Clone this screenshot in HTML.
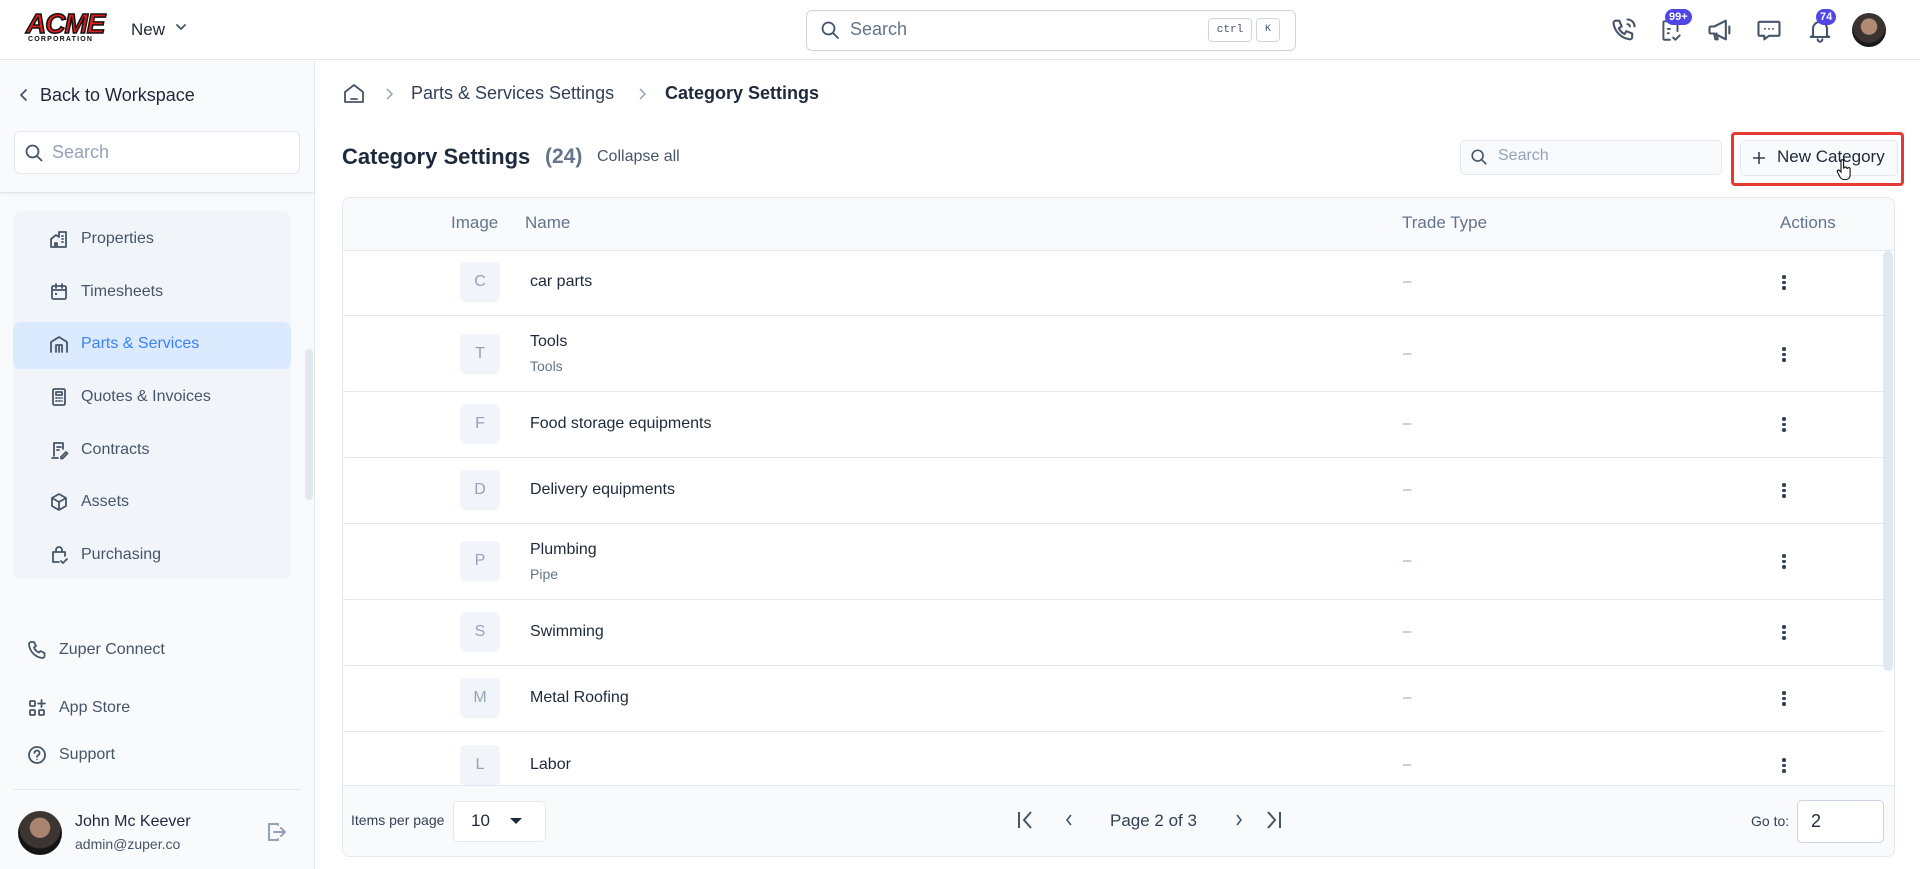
<!DOCTYPE html>
<html><head><meta charset="utf-8"><style>
*{box-sizing:border-box;margin:0;padding:0}
body{width:1920px;height:869px;overflow:hidden;background:#fff;font-family:"Liberation Sans",Arial,sans-serif;color:#1e293b;position:relative}
.a{position:absolute}
.hdr{left:0;top:0;width:1920px;height:60px;border-bottom:1px solid #e2e8f0;background:#fff}
.side{left:0;top:61px;width:315px;height:808px;background:#f8fafc;border-right:1px solid #e2e8f0}
.nav{font-size:16px;color:#475569;display:flex;align-items:center}
.nav svg{margin-right:12px}
.ic{fill:none;stroke:#475569;stroke-width:1.8;stroke-linecap:round;stroke-linejoin:round}
.row{left:343px;width:1540px;border-bottom:1px solid #e2e8f0}
.lt{width:40px;height:40px;background:#f1f5f9;border-radius:5px;color:#94a3b8;font-size:16px;display:flex;align-items:center;justify-content:center;left:460px}
.nm{left:530px;font-size:16px;color:#1e293b}
.sb{left:530px;font-size:14px;color:#64748b}
.da{left:1403px;color:#94a3b8;font-size:15px}
.kb{left:1782px;width:6px}
.kb i{display:block;width:3.5px;height:3.5px;background:#334155;border-radius:50%;margin:2px 0}
.badge{background:#4f46e5;color:#fff;font-size:11px;font-weight:bold;border-radius:10px;padding:1px 4px;line-height:14px}
</style></head><body>
<div class="a hdr"></div>
<!-- logo -->
<div class="a" style="left:26px;top:10px;width:80px;height:36px">
<div style="font:italic 900 28px 'Liberation Sans',sans-serif;color:#e11d1d;letter-spacing:-1px;line-height:28px;-webkit-text-stroke:1.5px #111">ACME</div>
<div style="font:bold 7px 'Liberation Sans',sans-serif;color:#111;letter-spacing:1.2px;margin-top:-2px;margin-left:2px">CORPORATION</div>
</div>
<div class="a" style="left:131px;top:20px;font-size:17px;color:#1e293b">New</div>
<svg class="a" style="left:175px;top:22px" width="12" height="10" viewBox="0 0 12 10"><path d="M2 3l4 4 4-4" class="ic" stroke="#334155"/></svg>
<!-- top search -->
<div class="a" style="left:806px;top:10px;width:490px;height:41px;border:1px solid #cbd5e1;border-radius:6px"></div>
<svg class="a" style="left:820px;top:20px" width="20" height="20" viewBox="0 0 20 20"><circle cx="8.5" cy="8.5" r="6" class="ic" stroke="#64748b"/><path d="M13 13l5 5" class="ic" stroke="#64748b"/></svg>
<div class="a" style="left:850px;top:19px;font-size:18px;color:#64748b">Search</div>
<div class="a" style="left:1208px;top:18px;width:44px;height:24px;border:1px solid #cbd5e1;border-radius:4px;font:11px 'Liberation Mono',monospace;color:#475569;text-align:center;line-height:22px">ctrl</div>
<div class="a" style="left:1256px;top:18px;width:24px;height:24px;border:1px solid #cbd5e1;border-radius:4px;font:10px 'Liberation Mono',monospace;color:#475569;text-align:center;line-height:22px">K</div>
<!-- header icons -->
<svg class="a" style="left:1610px;top:16px" width="28" height="28" viewBox="0 0 24 24"><path class="ic" d="M5 4h3l2 5-2.5 1.5a11 11 0 005 5L14 13l5 2v3a2 2 0 01-2 2A16 16 0 013 6a2 2 0 012-2zM15 3a6 6 0 016 6M15 7a2 2 0 012 2"/></svg>
<svg class="a" style="left:1658px;top:16px" width="26" height="28" viewBox="0 0 24 24"><path class="ic" d="M9 4H6a1 1 0 00-1 1v15a1 1 0 001 1h5M18 13V5a1 1 0 00-1-1h-2M9 11h2M9 15h1M14 19l2 2 4-4"/></svg>
<div class="a badge" style="left:1665px;top:9px">99+</div>
<svg class="a" style="left:1706px;top:16px" width="28" height="28" viewBox="0 0 24 24"><path class="ic" d="M4 9h3l10-5v16L7 15H4a1 1 0 01-1-1v-4a1 1 0 011-1zM7 15l1 5h2l-1-5M20 9v6"/></svg>
<svg class="a" style="left:1755px;top:16px" width="28" height="28" viewBox="0 0 24 24"><path class="ic" d="M4 5h16a1 1 0 011 1v10a1 1 0 01-1 1h-8l-4 3v-3H4a1 1 0 01-1-1V6a1 1 0 011-1z"/><circle cx="8.5" cy="11" r=".8" fill="#475569"/><circle cx="12" cy="11" r=".8" fill="#475569"/><circle cx="15.5" cy="11" r=".8" fill="#475569"/></svg>
<svg class="a" style="left:1806px;top:16px" width="28" height="28" viewBox="0 0 24 24"><path class="ic" d="M6 17V11a6 6 0 0112 0v6l2 1H4zM10 20a2 2 0 004 0"/></svg>
<div class="a badge" style="left:1816px;top:9px">74</div>
<div class="a" style="left:1852px;top:13px;width:34px;height:34px;border-radius:50%;background:radial-gradient(circle at 50% 40%,#b08a74 0 30%,#3b3330 32% 60%,#1a1a1a 62%)"></div>
<!-- sidebar -->
<div class="a side"></div>
<svg class="a" style="left:18px;top:88px" width="12" height="14" viewBox="0 0 12 14"><path d="M8 2L3 7l5 5" class="ic" stroke="#1e293b"/></svg>
<div class="a" style="left:40px;top:85px;font-size:18px;color:#1e293b">Back to Workspace</div>
<div class="a" style="left:0;top:128px;width:314px;height:65px;border-bottom:1px solid #e2e8f0;box-shadow:0 2px 3px rgba(0,0,0,.04)"></div>
<div class="a" style="left:14px;top:131px;width:286px;height:43px;background:#fff;border:1px solid #e2e8f0;border-radius:6px"></div>
<svg class="a" style="left:24px;top:143px" width="20" height="20" viewBox="0 0 20 20"><circle cx="8.5" cy="8.5" r="6" class="ic" stroke="#94a3b8"/><path d="M13 13l4.5 4.5" class="ic" stroke="#94a3b8"/></svg>
<div class="a" style="left:52px;top:142px;font-size:18px;color:#94a3b8">Search</div>
<div class="a" style="left:13px;top:211px;width:278px;height:368px;background:#f1f5f9;border-radius:8px"></div>
<div class="a" style="left:13px;top:322px;width:278px;height:47px;background:#dbeafe;border-radius:8px"></div>
<div class="a" style="left:305px;top:349px;width:8px;height:151px;background:#e2e8f0;border-radius:4px"></div>
<div class="a nav" style="left:49px;top:229px"><svg width="20" height="20" viewBox="0 0 20 20"><path class="ic" d="M2 18V10l5-4 3 2V3h7v15zM6 18v-4h2v4M13 7h1M13 10h1M13 13h1"/></svg>Properties</div>
<div class="a nav" style="left:49px;top:282px"><svg width="20" height="20" viewBox="0 0 20 20"><rect x="3" y="4" width="14" height="13" rx="1.5" class="ic"/><path class="ic" d="M3 8h14M7 2v4M13 2v4"/><rect x="6" y="11" width="2" height="2" fill="#475569"/></svg>Timesheets</div>
<div class="a nav" style="left:49px;top:334px;color:#3b82f6"><svg width="20" height="20" viewBox="0 0 20 20"><path class="ic" stroke="#3b82f6" d="M2 18V8l8-5 8 5v10M7 18v-7h6v7M10 11v7"/></svg>Parts &amp; Services</div>
<div class="a nav" style="left:49px;top:387px"><svg width="20" height="20" viewBox="0 0 20 20"><rect x="4" y="2" width="12" height="16" rx="1.5" class="ic"/><path class="ic" d="M7 5h6v3H7zM7 11h1M10 11h1M13 11h0M7 14h1M10 14h1M13 14h0"/></svg>Quotes &amp; Invoices</div>
<div class="a nav" style="left:49px;top:440px"><svg width="20" height="20" viewBox="0 0 20 20"><path class="ic" d="M5 16V3h9v6M8 7h4M8 10h2M3 18h6M12 17l5-5 1.5 1.5-5 5H12z"/></svg>Contracts</div>
<div class="a nav" style="left:49px;top:492px"><svg width="20" height="20" viewBox="0 0 20 20"><path class="ic" d="M10 2l7 4v8l-7 4-7-4V6zM3 6l7 4 7-4M10 10v8"/></svg>Assets</div>
<div class="a nav" style="left:49px;top:545px"><svg width="20" height="20" viewBox="0 0 20 20"><path class="ic" d="M4 7h12v4M4 7v10h6M7 7V5a3 3 0 016 0v2M12 16l2 2 4-4"/></svg>Purchasing</div>
<div class="a nav" style="left:27px;top:640px"><svg width="20" height="20" viewBox="0 0 20 20"><path class="ic" d="M4 2h3l2 4-2 1.5a9 9 0 005 5L13.5 11l4 2v3a2 2 0 01-2 2A15 15 0 012 4a2 2 0 012-2z"/></svg>Zuper Connect</div>
<div class="a nav" style="left:27px;top:698px"><svg width="20" height="20" viewBox="0 0 20 20"><rect x="3" y="3" width="5" height="5" rx="1" class="ic"/><rect x="3" y="12" width="5" height="5" rx="1" class="ic"/><rect x="12" y="12" width="5" height="5" rx="1" class="ic"/><path class="ic" d="M14.5 2v7M11 5.5h7"/></svg>App Store</div>
<div class="a nav" style="left:27px;top:745px"><svg width="20" height="20" viewBox="0 0 20 20"><circle cx="10" cy="10" r="8" class="ic"/><path class="ic" d="M7.5 8a2.5 2.5 0 114 2c-1 .6-1.5 1-1.5 2"/><circle cx="10" cy="14.5" r=".8" fill="#475569"/></svg>Support</div>
<div class="a" style="left:13px;top:789px;width:288px;height:1px;background:#e2e8f0"></div>
<div class="a" style="left:18px;top:811px;width:44px;height:44px;border-radius:50%;background:radial-gradient(circle at 50% 38%,#a9856f 0 28%,#3d3532 30% 58%,#151515 60%)"></div>
<div class="a" style="left:75px;top:813px;font-size:16px;color:#1e293b">John Mc Keever</div>
<div class="a" style="left:75px;top:836px;font-size:14px;color:#475569">admin@zuper.co</div>
<svg class="a" style="left:264px;top:820px" width="24" height="24" viewBox="0 0 24 24"><path d="M14 5V4H5v16h9v-1M10 12h11M17 8l4 4-4 4" fill="none" stroke="#94a3b8" stroke-width="2" stroke-linecap="round" stroke-linejoin="round"/></svg>
<!-- main -->
<svg class="a" style="left:342px;top:82px" width="24" height="24" viewBox="0 0 24 24"><path d="M3 20V10l9-7 9 7v10zM9 17h6" fill="none" stroke="#475569" stroke-width="1.8" stroke-linejoin="round" stroke-linecap="round"/></svg>
<svg class="a" style="left:384px;top:87px" width="10" height="14" viewBox="0 0 10 14"><path d="M3 2l5 5-5 5" fill="none" stroke="#94a3b8" stroke-width="1.5"/></svg>
<div class="a" style="left:411px;top:83px;font-size:18px;color:#334155">Parts &amp; Services Settings</div>
<svg class="a" style="left:637px;top:87px" width="10" height="14" viewBox="0 0 10 14"><path d="M3 2l5 5-5 5" fill="none" stroke="#94a3b8" stroke-width="1.5"/></svg>
<div class="a" style="left:665px;top:83px;font-size:18px;font-weight:bold;color:#1e293b">Category Settings</div>
<div class="a" style="left:342px;top:144px;font-size:22px;font-weight:bold;color:#1e293b">Category Settings</div>
<div class="a" style="left:545px;top:145px;font-size:21px;font-weight:bold;color:#64748b">(24)</div>
<div class="a" style="left:597px;top:148px;font-size:16px;color:#475569">Collapse all</div>
<div class="a" style="left:1460px;top:140px;width:262px;height:35px;background:#f8fafc;border:1px solid #e2e8f0;border-radius:5px"></div>
<svg class="a" style="left:1470px;top:148px" width="18" height="18" viewBox="0 0 20 20"><circle cx="8.5" cy="8.5" r="6" class="ic" stroke="#94a3b8"/><path d="M13 13l4.5 4.5" class="ic" stroke="#94a3b8"/></svg>
<div class="a" style="left:1498px;top:147px;font-size:16px;color:#94a3b8">Search</div>
<div class="a" style="left:1731px;top:132px;width:173px;height:54px;border:3px solid #e53935;border-radius:4px"></div>
<div class="a" style="left:1740px;top:140px;width:158px;height:36px;background:#f8fafc;border:1px solid #e2e8f0;border-radius:5px"></div>
<svg class="a" style="left:1751px;top:150px" width="16" height="16" viewBox="0 0 16 16"><path d="M8 2v12M2 8h12" stroke="#334155" stroke-width="1.6"/></svg>
<div class="a" style="left:1777px;top:147px;font-size:17px;color:#1e293b">New Category</div>
<svg class="a" style="left:1836px;top:159px" width="16" height="22" viewBox="0 0 16 22"><path d="M5 2a1.3 1.3 0 012.6 0v7l1-.3a1.2 1.2 0 012.3.6l1-.2a1.2 1.2 0 012.2.7V16c0 3-2 4.5-4.5 4.5H8c-2 0-3-1-4-2.5L1.5 13a1.2 1.2 0 012-1.4L5 13z" fill="#fff" stroke="#111" stroke-width="1.1"/></svg>
<!-- table -->
<div class="a" style="left:342px;top:197px;width:1553px;height:660px;border:1px solid #e2e8f0;border-radius:8px;overflow:hidden">
 <div style="height:53px;background:#f8fafc;border-bottom:1px solid #e2e8f0"></div>
 <div style="position:absolute;left:0;top:587px;width:100%;height:73px;background:#f8fafc;border-top:1px solid #e2e8f0"></div>
</div>
<div class="a" style="left:1883px;top:251px;width:10px;height:420px;background:#e2e8f0;border-radius:5px"></div>
<div class="a" style="left:451px;top:213px;font-size:17px;color:#64748b">Image</div>
<div class="a" style="left:525px;top:213px;font-size:17px;color:#64748b">Name</div>
<div class="a" style="left:1402px;top:213px;font-size:17px;color:#64748b">Trade Type</div>
<div class="a" style="left:1780px;top:213px;font-size:17px;color:#64748b">Actions</div>
<div class="a row" style="top:250px;height:66px"></div>
<div class="a row" style="top:316px;height:76px"></div>
<div class="a row" style="top:392px;height:66px"></div>
<div class="a row" style="top:458px;height:66px"></div>
<div class="a row" style="top:524px;height:76px"></div>
<div class="a row" style="top:600px;height:66px"></div>
<div class="a row" style="top:666px;height:66px"></div>

<div class="a lt" style="top:262px">C</div><div class="a nm" style="top:273px">car parts</div><div class="a da" style="top:273px">–</div><div class="a kb" style="top:273px"><i></i><i></i><i></i></div>
<div class="a lt" style="top:334px">T</div><div class="a nm" style="top:333px">Tools</div><div class="a sb" style="top:358px">Tools</div><div class="a da" style="top:345px">–</div><div class="a kb" style="top:345px"><i></i><i></i><i></i></div>
<div class="a lt" style="top:404px">F</div><div class="a nm" style="top:415px">Food storage equipments</div><div class="a da" style="top:415px">–</div><div class="a kb" style="top:415px"><i></i><i></i><i></i></div>
<div class="a lt" style="top:470px">D</div><div class="a nm" style="top:481px">Delivery equipments</div><div class="a da" style="top:481px">–</div><div class="a kb" style="top:481px"><i></i><i></i><i></i></div>
<div class="a lt" style="top:541px">P</div><div class="a nm" style="top:541px">Plumbing</div><div class="a sb" style="top:566px">Pipe</div><div class="a da" style="top:552px">–</div><div class="a kb" style="top:552px"><i></i><i></i><i></i></div>
<div class="a lt" style="top:612px">S</div><div class="a nm" style="top:623px">Swimming</div><div class="a da" style="top:623px">–</div><div class="a kb" style="top:623px"><i></i><i></i><i></i></div>
<div class="a lt" style="top:678px">M</div><div class="a nm" style="top:689px">Metal Roofing</div><div class="a da" style="top:689px">–</div><div class="a kb" style="top:689px"><i></i><i></i><i></i></div>
<div class="a lt" style="top:745px;height:40px;overflow:hidden">L</div><div class="a nm" style="top:756px">Labor</div><div class="a da" style="top:756px">–</div><div class="a kb" style="top:756px"><i></i><i></i><i></i></div>
<!-- footer -->
<div class="a" style="left:343px;top:785px;width:1551px;height:71px;background:#f8fafc;border-top:1px solid #e2e8f0;border-radius:0 0 8px 8px"></div>
<div class="a" style="left:351px;top:812px;font-size:14px;color:#334155">Items per page</div>
<div class="a" style="left:453px;top:801px;width:93px;height:41px;background:#fff;border:1px solid #e2e8f0;border-radius:5px"></div>
<div class="a" style="left:471px;top:811px;font-size:17px;color:#1e293b">10</div>
<svg class="a" style="left:509px;top:816px" width="14" height="10" viewBox="0 0 14 10"><path d="M1 2h12L7 8z" fill="#1e293b"/></svg>
<svg class="a" style="left:1015px;top:809px" width="22" height="22" viewBox="0 0 22 22"><path d="M4 3v16M16 3l-7 8 7 8" fill="none" stroke="#475569" stroke-width="2"/></svg>
<svg class="a" style="left:1062px;top:812px" width="14" height="16" viewBox="0 0 14 16"><path d="M9 3l-4 5 4 5" fill="none" stroke="#475569" stroke-width="1.6"/></svg>
<div class="a" style="left:1110px;top:811px;font-size:17px;color:#334155">Page 2 of 3</div>
<svg class="a" style="left:1232px;top:812px" width="14" height="16" viewBox="0 0 14 16"><path d="M5 3l4 5-4 5" fill="none" stroke="#475569" stroke-width="1.6"/></svg>
<svg class="a" style="left:1262px;top:809px" width="22" height="22" viewBox="0 0 22 22"><path d="M18 3v16M6 3l7 8-7 8" fill="none" stroke="#475569" stroke-width="2"/></svg>
<div class="a" style="left:1751px;top:813px;font-size:14px;color:#334155">Go to:</div>
<div class="a" style="left:1797px;top:800px;width:87px;height:43px;background:#fff;border:1px solid #cbd5e1;border-radius:5px"></div>
<div class="a" style="left:1811px;top:811px;font-size:18px;color:#1e293b">2</div>
</body></html>
